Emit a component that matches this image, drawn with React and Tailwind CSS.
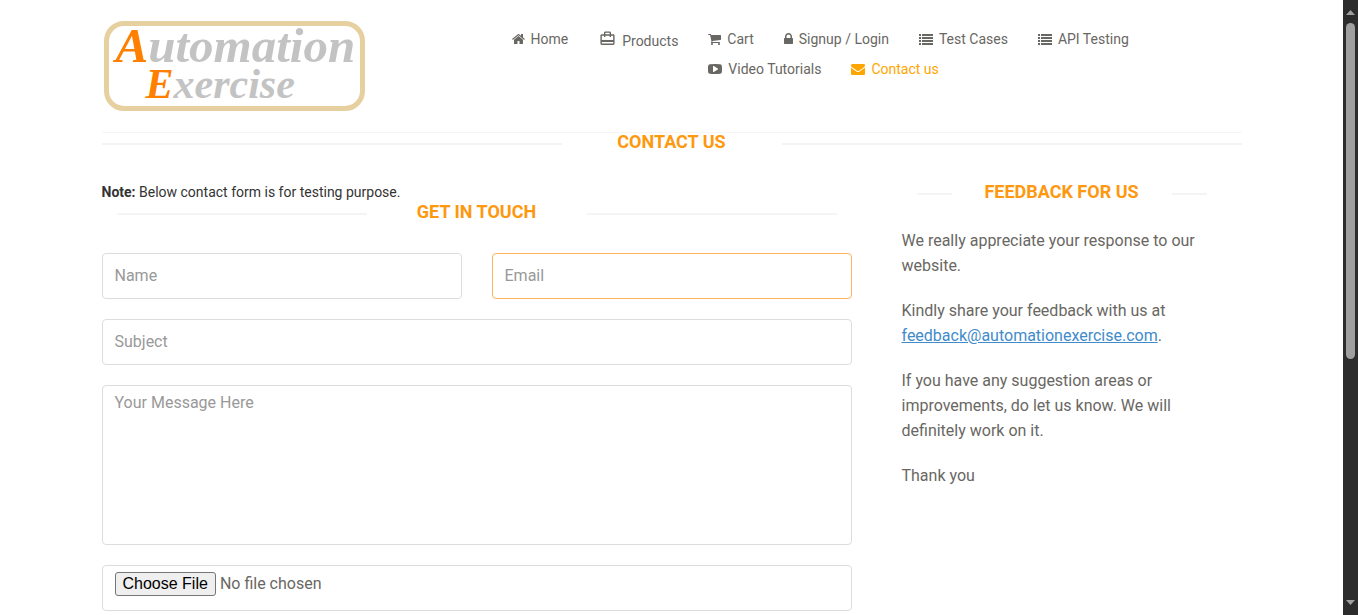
import React from "react";

const GLYPHS = {
  home: {
    box: "64 0 1664 1792",
    size: "w-[13px] h-[14px]",
    d: "M1472 992v480q0 26-19 45t-45 19h-384v-384h-256v384h-384q-26 0-45-19t-19-45v-480q0-1 .5-3t.5-3l575-474 575 474q1 2 1 6zm223-69l-62 74q-8 9-21 11h-3q-13 0-21-7l-692-577-692 577q-12 8-24 7-13-2-21-11l-62-74q-8-10-7-23.5t11-21.5l719-599q32-26 76-26t76 26l244 204v-195q0-14 9-23t23-9h192q14 0 23 9t9 23v408l219 182q10 8 11 21.5t-7 23.5z",
  },
  bag: {
    box: "0 0 24 24",
    size: "w-[17px] h-[17px] -mt-1.5 ml-px",
    d: "M20 6h-3V4c0-1.11-.89-2-2-2H9c-1.11 0-2 .89-2 2v2H4c-1.11 0-2 .89-2 2v11c0 1.11.89 2 2 2h16c1.11 0 2-.89 2-2V8c0-1.11-.89-2-2-2zM9 4h6v2H9V4zm11 15H4v-2h16v2zm0-5H4V8h3v2h2V8h6v2h2V8h3v6z",
  },
  cart: {
    box: "64 0 1664 1792",
    size: "w-[13px] h-[14px]",
    d: "M704 1536q0 52-38 90t-90 38-90-38-38-90 38-90 90-38 90 38 38 90zm896 0q0 52-38 90t-90 38-90-38-38-90 38-90 90-38 90 38 38 90zm128-1088v512q0 24-16.5 42.5t-40.5 21.5l-1044 122q13 60 13 70 0 16-24 64h920q26 0 45 19t19 45-19 45-45 19h-1024q-26 0-45-19t-19-45q0-11 8-31.5t16-36 21.5-40 15.5-29.5l-177-823h-204q-26 0-45-19t-19-45 19-45 45-19h256q16 0 28.5 6.5t19.5 15.5 13 24.5 8 26 5.5 29.5 4.5 26h1201q26 0 45 19t19 45z",
  },
  lock: {
    box: "320 0 1152 1792",
    size: "w-[9px] h-[14px]",
    d: "M640 768h512v-192q0-106-75-181t-181-75-181 75-75 181v192zm832 96v576q0 40-28 68t-68 28h-960q-40 0-68-28t-28-68v-576q0-40 28-68t68-28h32v-192q0-184 132-316t316-132 316 132 132 316v192h32q40 0 68 28t28 68z",
  },
  list: {
    box: "0 0 1792 1792",
    size: "w-[14px] h-[14px]",
    d: "M0 256h256v256H0zM384 256h1408v256H384zM0 640h256v256H0zM384 640h1408v256H384zM0 1024h256v256H0zM384 1024h1408v256H384zM0 1408h256v256H0zM384 1408h1408v256H384z",
  },
  video: {
    box: "0 0 1792 1792",
    size: "w-[14px] h-[14px]",
    d: "M1280 896q0-37-30-54l-512-320q-31-20-65-2-33 18-33 56v640q0 38 33 56 16 8 31 8 20 0 34-10l512-320q30-17 30-54zm512 0q0 96-1 150t-8.5 136.5-22.5 147.5q-16 73-69 123t-124 58q-222 25-671 25t-671-25q-71-8-124.5-58t-69.5-123q-14-65-21.5-147.5t-8.5-136.5-1-150 1-150 8.5-136.5 22.5-147.5q16-73 69-123t124-58q222-25 671-25t671 25q71 8 124.5 58t69.5 123q14 65 21.5 147.5t8.5 136.5 1 150z",
  },
  mail: {
    box: "0 0 1792 1792",
    size: "w-[14px] h-[14px]",
    d: "M1792 710v794q0 66-47 113t-113 47h-1472q-66 0-113-47t-47-113v-794q44 49 101 87 362 246 497 345 57 42 92.5 65.5t94.5 48 110 24.5h2q51 0 110-24.5t94.5-48 92.5-65.5q170-123 498-345 57-39 100-87zm0-294q0 79-49 151t-122 123q-376 261-468 325-10 7-42.5 31t-54 38.5-52 32.5-57.5 27-50 9h-2q-23 0-50-9t-57.5-27-52-32.5-54-38.5-42.5-31q-91-64-262-182.5t-205-142.5q-62-42-117-115.5t-55-136.5q0-78 41.5-130t118.5-52h1472q65 0 112.5 47t47.5 113z",
  },
};

const LINKS = [
  { icon: "home", label: "Home" },
  { icon: "bag", label: "Products", tall: true },
  { icon: "cart", label: "Cart" },
  { icon: "lock", label: "Signup / Login" },
  { icon: "list", label: "Test Cases" },
  { icon: "list", label: "API Testing" },
  { icon: "video", label: "Video Tutorials" },
  { icon: "mail", label: "Contact us", active: true },
];

function Glyph({ name }) {
  const g = GLYPHS[name];
  return (
    <svg viewBox={g.box} className={`shrink-0 fill-current ${g.size}`} aria-hidden="true">
      <path d={g.d} />
    </svg>
  );
}

function Logo() {
  return (
    <a
      href="#home"
      className="flex h-[90px] w-[261px] flex-col rounded-[20px] border-5 border-[#e6d09f] pt-px pl-[7px] font-['Liberation_Serif',serif] font-bold whitespace-nowrap text-[#c3c3c3] italic"
    >
      <span className="text-[49px] leading-[38px]">
        <span className="text-[#ff8000]">A</span>utomation
      </span>
      <span className="pl-[30px] text-[42px] leading-[38px]">
        <span className="text-[#ff8000]">E</span>xercise
      </span>
    </a>
  );
}

function Title({ children }) {
  return (
    <h2 className="flex items-center text-lg leading-5 font-bold text-[#fe980f] uppercase">
      <span className="mt-1 h-0.5 flex-1 bg-[#f4f4f4]" />
      <span className="w-[220px] text-center">{children}</span>
      <span className="mt-1 h-0.5 flex-1 bg-[#f4f4f4]" />
    </h2>
  );
}

const FIELD =
  "block w-full rounded border border-[#dddddd] bg-white px-3 pt-1.5 pb-2 text-base text-[#696763] placeholder:text-[#999999] outline-none focus:border-[#fdb45e]";

function ScrollBar() {
  return (
    <div className="flex w-[15px] shrink-0 flex-col items-center bg-[#2c2c2c] py-2.5" aria-hidden="true">
      <svg viewBox="0 0 9 5" className="h-[5px] w-[9px] fill-[#9f9f9f]">
        <path d="M4.5 0L9 5H0z" />
      </svg>
      <div className="flex w-full flex-1 flex-col items-center py-2">
        <div className="h-[59%] w-[9px] rounded-full bg-[#9f9f9f]" />
      </div>
      <svg viewBox="0 0 9 5" className="h-[5px] w-[9px] fill-[#9f9f9f]">
        <path d="M0 0h9L4.5 5z" />
      </svg>
    </div>
  );
}

export default function App() {
  return (
    <div className="flex h-screen overflow-hidden bg-white font-[Roboto,sans-serif] text-sm text-[#333333]">
      <div className="min-w-0 flex-1 overflow-hidden">
        <div className="mx-auto max-w-[1170px] px-[15px]">
          <header className="flex border-b border-[#f5f5f5] pt-[21px] pb-[21px]">
            <div className="w-[395px] shrink-0 pl-0.5">
              <Logo />
            </div>
            <nav className="min-w-0 flex-1 pt-2">
              <ul>
                {LINKS.map((l) => (
                  <li key={l.label} className={`float-left px-[15px] ${l.tall ? "h-8 pt-0.5" : "h-[30px]"}`}>
                    <a
                      href="#nav"
                      className={`flex items-center gap-1.5 leading-5 ${
                        l.active ? "text-[#ffa500]" : "text-[#696763]"
                      }`}
                    >
                      <Glyph name={l.icon} />
                      {l.label}
                    </a>
                  </li>
                ))}
              </ul>
            </nav>
          </header>

          <main className="-mt-px">
            <Title>Contact us</Title>
            <div className="flex gap-[50px] pt-[30px]">
              <section className="min-w-0 flex-1">
                <p className="leading-5">
                  <b>Note:</b> Below contact form is for testing purpose.
                </p>
                <div className="px-[15px]">
                  <Title>Get in touch</Title>
                </div>
                <form className="grid grid-cols-2 gap-x-[30px] gap-y-5 pt-[31px]">
                  <input aria-label="Name" placeholder="Name" className={`${FIELD} h-[46px]`} />
                  <input
                    type="email"
                    aria-label="Email"
                    placeholder="Email"
                    className={`${FIELD} h-[46px] border-[#fdb45e]!`}
                  />
                  <input aria-label="Subject" placeholder="Subject" className={`${FIELD} col-span-2 h-[46px]`} />
                  <textarea
                    aria-label="Your Message Here"
                    placeholder="Your Message Here"
                    className={`${FIELD} col-span-2 h-40 resize-none leading-[22px]`}
                  />
                  <input
                    type="file"
                    aria-label="Upload file"
                    className={`${FIELD} col-span-2 h-[46px] file:mr-1 file:h-6 file:rounded-[3px] file:border file:border-solid file:border-[#767676] file:bg-[#efefef] file:px-[7px] file:font-['Liberation_Sans',sans-serif] file:text-base file:leading-5 file:text-black`}
                  />
                </form>
              </section>

              <aside className="mr-5 w-[320px] shrink-0">
                <div className="px-[15px]">
                  <Title>Feedback for us</Title>
                </div>
                <address className="space-y-5 pt-[26px] text-base leading-[25px] text-[#696763] not-italic">
                  <p>We really appreciate your response to our website.</p>
                  <p>
                    Kindly share your feedback with us at{" "}
                    <a href="mailto:feedback@automationexercise.com" className="text-[#428bca] underline">
                      feedback@automationexercise.com
                    </a>
                    .
                  </p>
                  <p>If you have any suggestion areas or improvements, do let us know. We will definitely work on it.</p>
                  <p>Thank you</p>
                </address>
              </aside>
            </div>
          </main>
        </div>
      </div>
      <ScrollBar />
    </div>
  );
}
